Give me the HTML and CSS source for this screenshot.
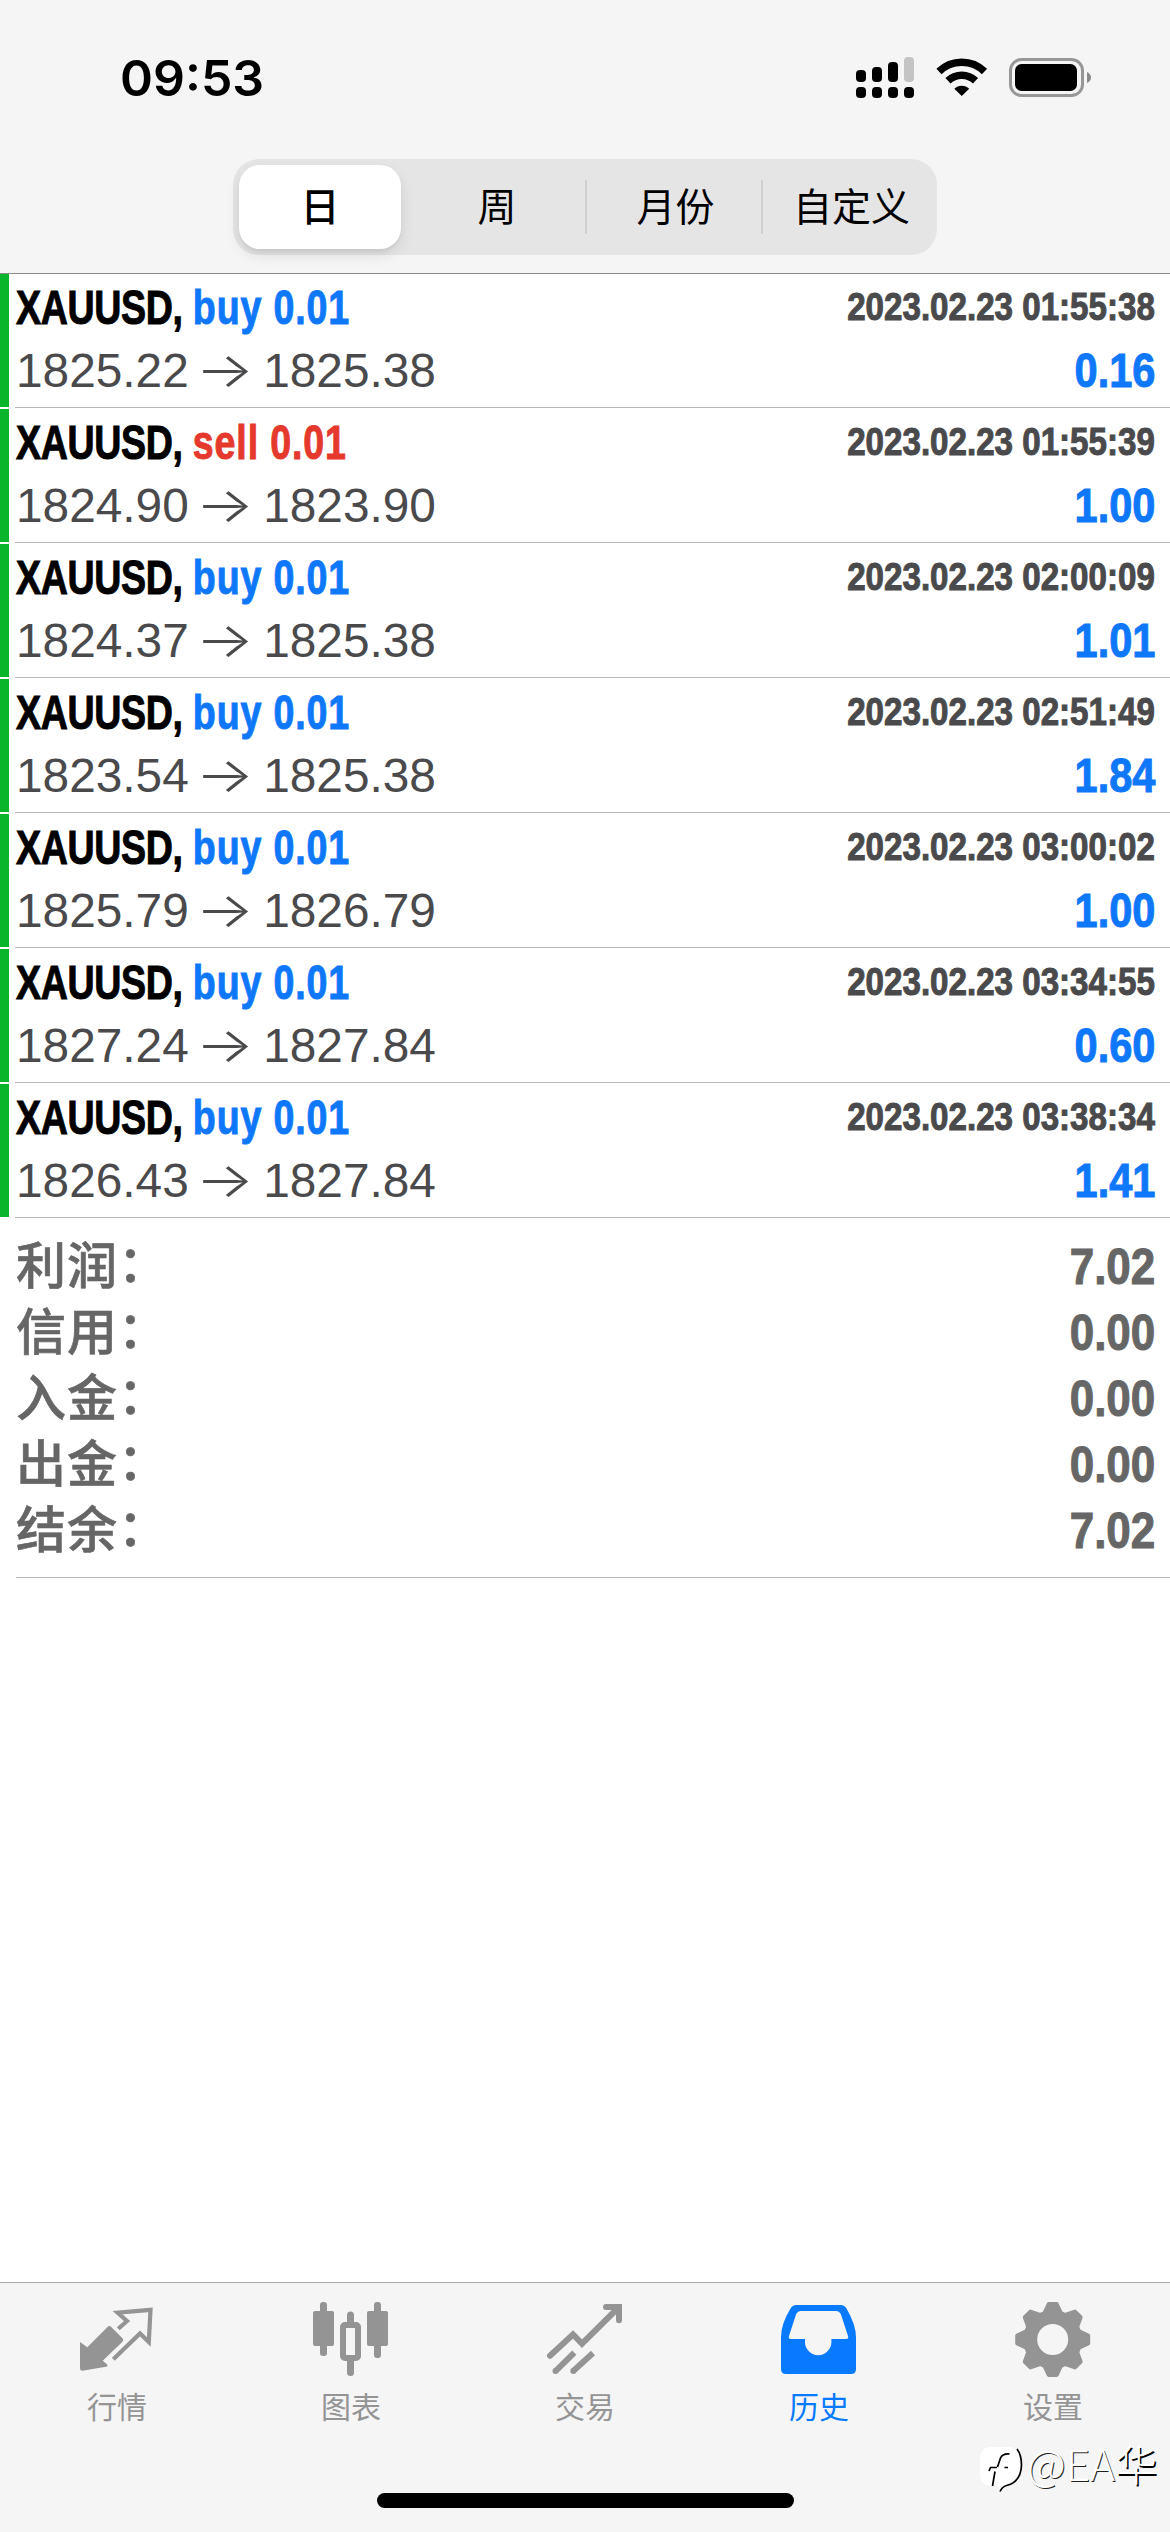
FILE: index.html
```
<!DOCTYPE html>
<html lang="zh-CN">
<head>
<meta charset="utf-8">
<title>历史</title>
<link rel="stylesheet" href="styles.css">
</head>
<body>
<div class="screen">
  <header class="top">
    <div class="status">
      <span class="clock">09:53</span>
      <svg class="status-icons" width="240" height="50" viewBox="0 0 240 50">
        <g>
          <rect x="6" y="18" width="10" height="12" rx="4"/>
          <rect x="22" y="15" width="10" height="15" rx="4"/>
          <rect x="38" y="10" width="10" height="20" rx="4"/>
          <rect x="54" y="5" width="10" height="25" rx="4" fill="#c4c4c4"/>
          <rect x="6" y="35" width="10" height="11" rx="4"/>
          <rect x="22" y="35" width="10" height="11" rx="4"/>
          <rect x="38" y="35" width="10" height="11" rx="4"/>
          <rect x="54" y="35" width="10" height="11" rx="4"/>
        </g>
        <g fill="none" stroke="#000" stroke-width="7.5">
          <path d="M89 19.500a32.500 32.500 0 0 1 45.500 0"/>
          <path d="M98 28.700a19.800 19.800 0 0 1 27.500 0"/>
        </g>
        <path d="M104.300 36.800a10.500 10.500 0 0 1 14.900 0L111.750 44z"/>
        <rect x="160.500" y="7.500" width="72" height="36" rx="11" fill="none" stroke="#979797" stroke-width="3"/>
        <rect x="165" y="12" width="62" height="27" rx="6.500"/>
        <path d="M237 20q4 2 4 5.500t-4 5.500z" fill="#8b8b8b"/>
      </svg>
    </div>
    <nav class="segments">
      <span class="segment selected">日</span>
      <span class="segment">周</span>
      <span class="segment">月份</span>
      <span class="segment">自定义</span>
    </nav>
  </header>

  <main class="content">
    <ul class="deals">
      <li class="deal"><div class="line"><span class="title">XAUUSD, <b class="buy">buy 0.01</b></span><span class="date">2023.02.23 01:55:38</span></div><div class="line"><span class="price">1825.22 <i class="arrow">→</i> 1825.38</span><span class="profit">0.16</span></div></li>
      <li class="deal"><div class="line"><span class="title">XAUUSD, <b class="sell">sell 0.01</b></span><span class="date">2023.02.23 01:55:39</span></div><div class="line"><span class="price">1824.90 <i class="arrow">→</i> 1823.90</span><span class="profit">1.00</span></div></li>
      <li class="deal"><div class="line"><span class="title">XAUUSD, <b class="buy">buy 0.01</b></span><span class="date">2023.02.23 02:00:09</span></div><div class="line"><span class="price">1824.37 <i class="arrow">→</i> 1825.38</span><span class="profit">1.01</span></div></li>
      <li class="deal"><div class="line"><span class="title">XAUUSD, <b class="buy">buy 0.01</b></span><span class="date">2023.02.23 02:51:49</span></div><div class="line"><span class="price">1823.54 <i class="arrow">→</i> 1825.38</span><span class="profit">1.84</span></div></li>
      <li class="deal"><div class="line"><span class="title">XAUUSD, <b class="buy">buy 0.01</b></span><span class="date">2023.02.23 03:00:02</span></div><div class="line"><span class="price">1825.79 <i class="arrow">→</i> 1826.79</span><span class="profit">1.00</span></div></li>
      <li class="deal"><div class="line"><span class="title">XAUUSD, <b class="buy">buy 0.01</b></span><span class="date">2023.02.23 03:34:55</span></div><div class="line"><span class="price">1827.24 <i class="arrow">→</i> 1827.84</span><span class="profit">0.60</span></div></li>
      <li class="deal"><div class="line"><span class="title">XAUUSD, <b class="buy">buy 0.01</b></span><span class="date">2023.02.23 03:38:34</span></div><div class="line"><span class="price">1826.43 <i class="arrow">→</i> 1827.84</span><span class="profit">1.41</span></div></li>
    </ul>
    <dl class="summary">
      <div class="total"><dt>利润<span class="colon">：</span></dt><dd>7.02</dd></div>
      <div class="total"><dt>信用<span class="colon">：</span></dt><dd>0.00</dd></div>
      <div class="total"><dt>入金<span class="colon">：</span></dt><dd>0.00</dd></div>
      <div class="total"><dt>出金<span class="colon">：</span></dt><dd>0.00</dd></div>
      <div class="total"><dt>结余<span class="colon">：</span></dt><dd>7.02</dd></div>
    </dl>
  </main>

  <footer class="tabbar">
    <nav class="tabs">
      <a class="tab">
        <svg class="icon" viewBox="0 0 80 80"><path d="M3 42l7.300 5.300L30.500 27q1.800-2 3.700 0l11.300 11.300q1.700 1.700 0 3.500L25.700 60.700l4.600 3.800v2L5.500 70.700Q3 70.700 3 68z"/><path d="M41.300 28.700L50 21 40.600 12.700 73.500 9.800 71.800 42 63 33.500 36.300 59.300" fill="none" stroke="currentColor" stroke-width="4.200"/></svg>
        <span>行情</span>
      </a>
      <a class="tab">
        <svg class="icon" viewBox="0 0 80 80"><rect x="2" y="11" width="21" height="35" rx="2"/><rect x="9" y="2" width="7" height="54" rx="3"/><rect x="56" y="11" width="21" height="35" rx="2"/><rect x="63" y="2" width="7" height="56" rx="3"/><rect x="32" y="25" width="15" height="33" rx="2" fill="none" stroke="currentColor" stroke-width="6"/><path d="M36 24v-9a3.500 3.500 0 0 1 7 0v9zM36 60v12.500a3.500 3.500 0 0 0 7 0V60z"/></svg>
        <span>图表</span>
      </a>
      <a class="tab">
        <svg class="icon" viewBox="0 0 80 80"><g fill="none" stroke="currentColor" stroke-width="6"><path d="M5 55.700L28 34.500l9 9.200L73 8" stroke-linecap="round"/><path d="M61 7h13v13.300" stroke-linecap="round"/><path d="M10.300 71.300l19-18.600M28 71.300L48 53"/></g><circle cx="10.500" cy="71" r="3"/><circle cx="28.300" cy="71" r="3"/></svg>
        <span>交易</span>
      </a>
      <a class="tab active">
        <svg class="icon" viewBox="0 0 80 80"><path fill-rule="evenodd" d="M17 5h45q3.500 0 5.500 3.500Q77 25 77 37v32q0 5-5 5H7q-5 0-5-5V37Q2 24 11.500 8.500 13.500 5 17 5zM22 11q-3.500 0-5 3.500L10 36q-1 3 2 3h14v3a13.200 13.200 0 0 0 26.400 0v-3H67q3 0 2-3l-7-21.500Q60.500 11 57 11z"/></svg>
        <span>历史</span>
      </a>
      <a class="tab">
        <svg class="icon" viewBox="0 0 80 80"><g transform="translate(39.700 39.500)"><circle r="22.500" fill="none" stroke="currentColor" stroke-width="14"/><g stroke="currentColor" stroke-width="4" stroke-linejoin="round"><path id="tooth" d="M-8-27L-4-35.500H4L8-27z"/><use href="#tooth" transform="rotate(45)"/><use href="#tooth" transform="rotate(90)"/><use href="#tooth" transform="rotate(135)"/><use href="#tooth" transform="rotate(180)"/><use href="#tooth" transform="rotate(225)"/><use href="#tooth" transform="rotate(270)"/><use href="#tooth" transform="rotate(315)"/></g></g></svg>
        <span>设置</span>
      </a>
    </nav>
    <div class="home"></div>
  </footer>

  <div class="watermark">
    <svg width="46" height="50" viewBox="0 0 46 50"><path d="M13 1h16q12 0 12 13v13q0 10-10 12l-9 5-4-4h-6Q1 39 1 28V14Q1 1 13 1z" fill="#fff"/><path d="M38 3q4.500 6 4.500 16Q42 36 27.500 39.500 23 41 21 45.500M30.500 8q-7-.5-9 4l-3 9M10 25l1.500-3.500H18M16 25.500L13.500 40M25.500 21.500H29" fill="none" stroke="#000" stroke-width="1.700"/></svg>
    <span>@EA<b class="name">华</b></span>
  </div>
</div>
</body>
</html>
```
FILE: styles.css
```
* { box-sizing: border-box; }

body {
  margin: 0;
  background: #fff;
  font-family: "Liberation Sans", "Noto Sans CJK SC", sans-serif;
}

.screen {
  position: relative;
  display: flex;
  flex-direction: column;
  width: 1170px;
  height: 2532px;
  overflow: hidden;
}

.top {
  height: 274px;
  background: #f5f5f5;
  border-bottom: 1px solid #8c8c8c;
}

.status {
  display: flex;
  justify-content: space-between;
  height: 159px;
  padding: 52px 80px 0 120px;
}

.status-icons { overflow: visible; }

.clock {
  font: 600 50px/52px Inter, sans-serif;
}

.segments {
  display: grid;
  grid-template-columns: repeat(4, 176px);
  width: 704px;
  height: 96px;
  margin: 0 auto;
  border-radius: 26px;
  background: #e5e5e6;
}

.segment {
  display: flex;
  align-items: center;
  justify-content: center;
  height: 96px;
  padding-bottom: 5px;
  font: 39px/1 "Noto Sans CJK SC", sans-serif;
}

.segment + .segment + .segment {
  padding-left: 5px;
  background: linear-gradient(#cfcfd0, #cfcfd0) left center / 2px 54px no-repeat;
}

.segment.selected {
  width: 162px;
  height: 84px;
  margin: 6px;
  border-radius: 21px;
  background: #fff;
  font-weight: 500;
  box-shadow: 0 6px 14px rgba(0, 0, 0, 0.1), 0 3px 3px rgba(0, 0, 0, 0.04);
}

.content { flex: 1; }

.deals {
  margin: 0;
  padding: 0;
  list-style: none;
}

.deal {
  height: 135px;
  padding: 2px 15px 0 15px;
  background:
    linear-gradient(#0ab52c, #0ab52c) 0 0 / 9px 133px no-repeat,
    linear-gradient(#b8b8ba, #b8b8ba) 15px 133px / 100% 1px no-repeat;
}

.line {
  display: flex;
  justify-content: space-between;
  align-items: flex-start;
  height: 63px;
  line-height: 63px;
}

/* Condensed bold face, narrowed toward the edge each text is aligned to */
.title, .date, .profit, .total dd {
  font-weight: 700;
  white-space: pre;
  transform-origin: right center;
  -webkit-text-stroke: 1px currentColor;
}

.title {
  font-size: 48px;
  letter-spacing: -0.4px;
  transform: translateX(1px) scaleX(0.782);
  transform-origin: left center;
}

.buy, .sell { letter-spacing: 1.1px; }
.buy { color: #0f78fa; }
.sell { color: #e5392d; }

.date {
  font-size: 38px;
  line-height: 62px;
  color: #4a4a4c;
  transform: scaleX(0.872);
}

.profit {
  font-size: 48px;
  color: #0f78fa;
  transform: scaleX(0.865);
}

.price {
  padding-left: 1px;
  font-size: 47.8px;
  color: #4a4a4c;
}

.arrow {
  display: inline-block;
  margin: 0 2px 0 0;
  font: 300 48px/1 Inter, sans-serif;
  transform: scaleX(1.28);
}

.summary {
  height: 359px;
  margin: 0 0 0 16px;
  padding: 15px 15px 0 0;
  border-bottom: 1px solid #b8b8ba;
}

.total {
  display: flex;
  justify-content: space-between;
  height: 66px;
  color: #666;
  line-height: 66px;
}

.total dt {
  font: 500 50px/56px "Noto Sans CJK SC", sans-serif;
  letter-spacing: 1px;
  -webkit-text-stroke: 0.6px currentColor;
}

.colon {
  display: inline-block;
  transform: translateY(-2px);
}

.total dd {
  margin: 0;
  font-size: 50px;
  transform: scaleX(0.88);
}

.tabbar {
  height: 250px;
  border-top: 1px solid #a9a9aa;
  background: #f5f5f5;
}

.tabs {
  display: grid;
  grid-template-columns: repeat(5, 1fr);
  height: 210px;
  padding-top: 17px;
}

.tab {
  display: flex;
  flex-direction: column;
  align-items: center;
  color: #949494;
  font: 30px/30px "Noto Sans CJK SC", sans-serif;
}

.tab span { margin-top: 10px; }
.tab.active { color: #087aff; }

.icon {
  display: block;
  width: 80px;
  height: 80px;
  fill: currentColor;
}

.home {
  width: 417px;
  height: 15px;
  margin: 0 auto;
  border-radius: 8px;
  background: #000;
}

.watermark {
  position: absolute;
  left: 979px;
  top: 2446px;
  display: flex;
  gap: 2px;
  color: #fff;
  font: 300 42.5px/33px "Noto Sans CJK SC", sans-serif;
  text-shadow: 1px 1px 0 #222;
  white-space: nowrap;
}

.name {
  font-weight: 300;
  text-shadow: 1.5px 1.5px 0 #000;
}
```
